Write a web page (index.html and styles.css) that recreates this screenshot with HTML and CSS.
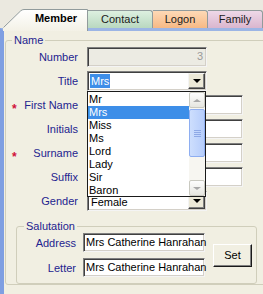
FILE: index.html
```html
<!DOCTYPE html>
<html lang="en">
<head>
    <meta charset="UTF-8">
    <title>Member</title>
    <link rel="stylesheet" href="styles.css">
</head>
<body>

<div class="window">
    <!-- Tabs -->
    <div class="tabs">
        <div class="tab tab-member">
            <svg class="tab-shape" width="85" height="22" viewBox="0 0 85 22">
                <defs>
                    <linearGradient id="memberFill" x1="0" y1="0" x2="0" y2="1">
                        <stop offset="0" stop-color="#ffffff"/>
                        <stop offset="1" stop-color="#f3f1e6"/>
                    </linearGradient>
                </defs>
                <path d="M0,22 L0,18.5 L17.5,2 Q19,0.5 21,0.5 L84.5,0.5 L84.5,22 Z" fill="url(#memberFill)"/>
                <path d="M0.5,18.5 L17.5,2 Q19,0.5 21,0.5 L84.5,0.5 L84.5,22" fill="none" stroke="#919b9c"/>
            </svg>
            Member
        </div>
        <div class="tab tab-contact">Contact</div>
        <div class="tab tab-logon">Logon</div>
        <div class="tab tab-family">Family</div>
    </div>

    <div class="panel">
        <fieldset class="group group-name">
            <legend>Name</legend>
            <div class="form">
                <span></span><span class="label">Number</span>
                <div class="field w-short num">3</div>

                <span></span><span class="label">Title</span>
                <div class="field w-short combo">
                    <span class="sel">Mrs</span>
                    <span class="combo-btn"><i class="arrow"></i></span>
                </div>

                <span class="req">*</span><span class="label">First Name</span>
                <div class="field w-long"></div>

                <span></span><span class="label">Initials</span>
                <div class="field w-long"></div>

                <span class="req">*</span><span class="label">Surname</span>
                <div class="field w-long"></div>

                <span></span><span class="label">Suffix</span>
                <div class="field w-long"></div>

                <span></span><span class="label">Gender</span>
                <div class="field w-short combo gender">
                    <span class="combo-text">Female</span>
                    <span class="combo-btn"><i class="arrow"></i></span>
                </div>
            </div>

            <fieldset class="group group-sal">
                <legend>Salutation</legend>
                <div class="sal">
                    <span class="label">Address</span>
                    <div class="field sal-input">Mrs Catherine Hanrahan</div>
                    <button class="set-button">Set</button>
                    <span class="label">Letter</span>
                    <div class="field sal-input">Mrs Catherine Hanrahan</div>
                </div>
            </fieldset>
        </fieldset>
    </div>

    <!-- Open Title list -->
    <div class="dropdown">
        <div class="options">
            <div class="option">Mr</div>
            <div class="option active">Mrs</div>
            <div class="option">Miss</div>
            <div class="option">Ms</div>
            <div class="option">Lord</div>
            <div class="option">Lady</div>
            <div class="option">Sir</div>
            <div class="option">Baron</div>
        </div>
        <div class="scroll">
            <div class="scroll-btn"><i class="arrow-up"></i></div>
            <div class="thumb"><i></i><i></i><i></i><i></i></div>
            <div class="track"></div>
            <div class="scroll-btn"><i class="arrow-down"></i></div>
        </div>
    </div>
</div>

</body>
</html>
```

FILE: styles.css
```css
* {
    box-sizing: border-box;
}
body {
    margin: 0;
    font-family: "Liberation Sans", Arial, sans-serif;
    font-size: 11px;
    background-color: #ebe9e0;
}
.window {
    position: relative;
    width: 263px;
    height: 294px;
    overflow: hidden;
}
/* Tabs */
.tabs {
    display: flex;
    align-items: flex-end;
    height: 28px;
}
.tab {
    height: 18px;
    line-height: 17px;
    text-align: center;
    color: #1a1a1a;
    border: 1px solid #919b9c;
    border-left: none;
    border-bottom: none;
    border-radius: 0 3px 0 0;
}
.tab-member {
    position: relative;
    z-index: 1;
    width: 85px;
    height: 22px;
    margin-left: 3px;
    margin-bottom: -3px;
    padding: 3px 0 0 21px;
    line-height: 13px;
    font-weight: bold;
    color: #000;
    border: none;
}
.tab-shape {
    position: absolute;
    left: 0;
    top: 0;
    z-index: -1;
}
.tab-contact {
    width: 65px;
    background: linear-gradient(#ddf0e0, #b9d8c0);
}
.tab-logon {
    width: 55px;
    background: linear-gradient(#fdd9b6, #f7b985);
}
.tab-family {
    width: 55px;
    background: linear-gradient(#eed8e8, #dab6ce);
}
/* Panel */
.panel {
    height: 266px;
    padding: 3px 0 0 1px;
    background-color: #f1efe2;
    border-top: 3px solid #9cb5e5;
    border-left: 4px solid #7f9fe2;
    overflow: hidden;
}
.group {
    margin: 0;
    padding: 0;
    min-width: 0;
    border: 1px solid #d0cebb;
    border-radius: 3px;
}
.group legend {
    margin-left: 6px;
    padding: 0 2px;
    line-height: 12px;
    color: #23238f;
}
.group-name {
    width: 300px;
}
.form {
    display: grid;
    grid-template-columns: 16px 56px auto;
    grid-auto-rows: 20px;
    row-gap: 4px;
    align-items: center;
    padding-top: 1px;
}
.label {
    text-align: right;
    color: #23238f;
}
.req {
    padding: 8px 0 0 6px;
    font-size: 12px;
    font-weight: bold;
    color: #d0103a;
}
.field {
    height: 20px;
    margin-left: 9px;
    padding: 0 3px;
    line-height: 16px;
    background-color: #fff;
    border: 1px solid;
    border-color: #7f7f7f #f4f4f4 #f4f4f4 #7f7f7f;
    box-shadow: inset 1px 1px 0 #404040, inset -1px -1px 0 #d4d0c8;
    white-space: nowrap;
}
.w-short {
    width: 120px;
}
.w-long {
    width: 156px;
}
.num {
    background-color: #ecebe3;
    color: #9a9a9a;
    text-align: right;
}
.combo {
    display: flex;
    align-items: center;
    justify-content: space-between;
    padding: 1px 1px 1px 2px;
}
.gender .combo-text {
    padding-top: 2px;
}
.sel {
    padding: 0 1px;
    line-height: 14px;
    background-color: #3d8ee8;
    color: #fff;
}
.combo-text {
    padding-left: 1px;
}
.combo-btn {
    display: flex;
    align-items: center;
    justify-content: center;
    width: 17px;
    height: 16px;
    background-color: #ece9d8;
    border: 1px solid;
    border-color: #f4f4f4 #404040 #404040 #f4f4f4;
    box-shadow: inset -1px -1px 0 #808080;
}
.arrow {
    border-top: 4px solid #000;
    border-left: 4px solid transparent;
    border-right: 4px solid transparent;
}
/* Salutation */
.group-sal {
    width: 241px;
    margin: 9px 0 0 10px;
}
.group-sal legend {
    margin-left: 7px;
}
.sal {
    display: grid;
    grid-template-columns: 59px 129px auto;
    grid-template-rows: 19px 19px;
    row-gap: 6px;
    align-items: center;
    padding: 1px 0 6px;
}
.sal-input {
    width: 122px;
    height: 19px;
    margin-left: 7px;
    padding: 0 2px;
    line-height: 16px;
    color: #000;
}
.set-button {
    grid-row: 1 / 3;
    grid-column: 3;
    width: 39px;
    height: 23px;
    margin-left: 8px;
    padding: 0;
    font-family: inherit;
    font-size: 11px;
    color: #000;
    background-color: #f1efe2;
    border: 1px solid;
    border-color: #fff #1a1a1a #1a1a1a #fff;
    box-shadow: inset -1px -1px 0 #808080;
}
/* Dropdown list */
.dropdown {
    position: absolute;
    left: 87px;
    top: 91px;
    z-index: 2;
    display: flex;
    width: 119px;
    height: 106px;
    background-color: #fff;
    border: 1px solid #1a1a1a;
}
.options {
    flex: 1;
    padding-top: 1px;
}
.option {
    height: 13px;
    line-height: 13px;
    padding-left: 1px;
    color: #000;
}
.option.active {
    background-color: #3d8ee8;
    color: #fff;
}
.scroll {
    display: flex;
    flex-direction: column;
    width: 16px;
    background-color: #f7f6f1;
}
.scroll-btn {
    display: flex;
    align-items: center;
    justify-content: center;
    height: 16px;
    background: linear-gradient(#fdfdfd, #e6e6e0);
    border: 1px solid #c9c9c0;
    border-radius: 2px;
}
.arrow-up {
    border-bottom: 3px solid #a8a8a8;
    border-left: 4px solid transparent;
    border-right: 4px solid transparent;
}
.arrow-down {
    border-top: 3px solid #a8a8a8;
    border-left: 4px solid transparent;
    border-right: 4px solid transparent;
}
.thumb {
    display: flex;
    flex-direction: column;
    align-items: center;
    justify-content: center;
    gap: 1px;
    height: 48px;
    margin-top: 1px;
    background: linear-gradient(90deg, #cddefd, #b6cdfb);
    border: 1px solid #8eaef1;
    border-radius: 2px;
}
.thumb i {
    width: 7px;
    height: 1px;
    background-color: #8ea9e6;
}
.track {
    flex: 1;
}
```
